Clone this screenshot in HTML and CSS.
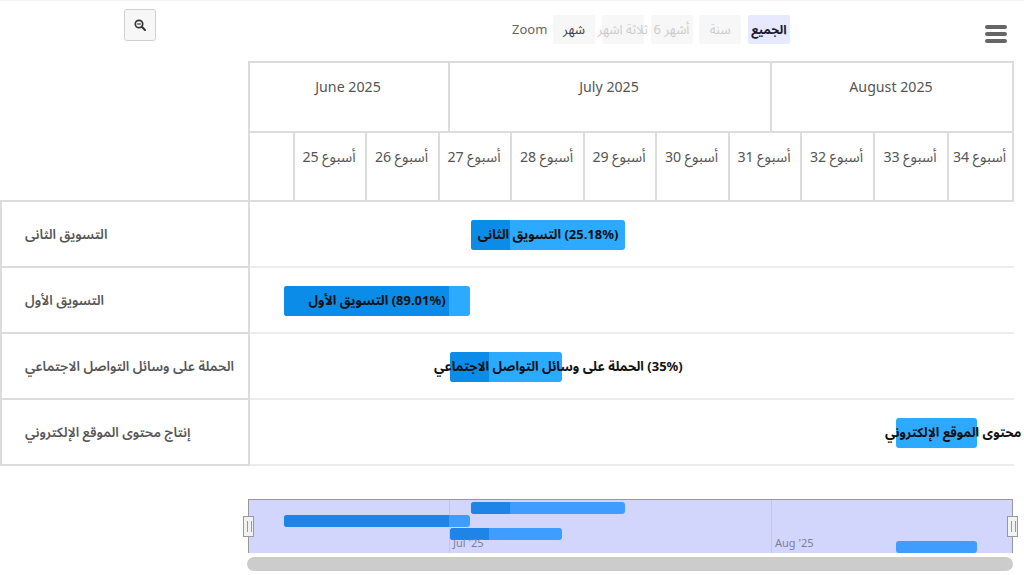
FILE: index.html
```html
<!DOCTYPE html>
<html lang="ar">
<head>
    <meta charset="UTF-8">
    <meta name="viewport" content="width=device-width, initial-scale=1.0">
    <title>Gantt</title>
    <link rel="stylesheet" href="styles.css">
</head>
<body>
    <div class="page">
        <!-- Toolbar -->
        <header class="toolbar">
            <button class="search-btn" aria-label="بحث">
                <svg width="12" height="12" viewBox="0 0 12 12">
                    <circle cx="5" cy="5" r="3.7" fill="none" stroke="#333" stroke-width="1.7"/>
                    <path d="M3.2 5h3.6" stroke="#333" stroke-width="1.2"/>
                    <path d="M7.8 7.8l3.2 3.2" stroke="#333" stroke-width="2" stroke-linecap="round"/>
                </svg>
            </button>
            <div class="range">
                <span class="range-label">Zoom</span>
                <button class="range-btn">شهر</button>
                <button class="range-btn disabled">ثلاثة اشهر</button>
                <button class="range-btn disabled">6 أشهر</button>
                <button class="range-btn disabled">سنة</button>
                <button class="range-btn selected">الجميع</button>
            </div>
            <button class="menu-btn" aria-label="القائمة">
                <span class="bar-line"></span>
                <span class="bar-line"></span>
                <span class="bar-line"></span>
            </button>
        </header>

        <!-- Cabecera de fechas -->
        <div class="dates">
            <div class="months">
                <div class="month">June 2025</div>
                <div class="month">July 2025</div>
                <div class="month month-august">August 2025</div>
            </div>
            <div class="weeks">
                <div class="week"></div>
                <div class="week">أسبوع 25</div>
                <div class="week">أسبوع 26</div>
                <div class="week">أسبوع 27</div>
                <div class="week">أسبوع 28</div>
                <div class="week">أسبوع 29</div>
                <div class="week">أسبوع 30</div>
                <div class="week">أسبوع 31</div>
                <div class="week">أسبوع 32</div>
                <div class="week">أسبوع 33</div>
                <div class="week week-last">أسبوع 34</div>
            </div>
        </div>

        <!-- Filas -->
        <div class="rows">
            <div class="row">
                <div class="row-name"><span dir="rtl">التسويق الثانى</span></div>
                <div class="row-track">
                    <div class="task" style="left: 221px; width: 154px;">
                        <div class="task-done" style="width: 39px;"></div>
                        <span class="task-label"><bdi>التسويق الثانى</bdi> <bdi dir="ltr">(25.18%)</bdi></span>
                    </div>
                </div>
            </div>
            <div class="row">
                <div class="row-name"><span dir="rtl">التسويق الأول</span></div>
                <div class="row-track">
                    <div class="task" style="left: 34px; width: 186px;">
                        <div class="task-done" style="width: 165px;"></div>
                        <span class="task-label"><bdi>التسويق الأول</bdi> <bdi dir="ltr">(89.01%)</bdi></span>
                    </div>
                </div>
            </div>
            <div class="row">
                <div class="row-name"><span dir="rtl">الحملة على وسائل التواصل الاجتماعي</span></div>
                <div class="row-track">
                    <div class="task" style="left: 200px; width: 112px;">
                        <div class="task-done" style="width: 39px;"></div>
                        <span class="task-label label-social"><bdi>الحملة على وسائل التواصل الاجتماعي</bdi> <bdi dir="ltr">(35%)</bdi></span>
                    </div>
                </div>
            </div>
            <div class="row">
                <div class="row-name"><span dir="rtl">إنتاج محتوى الموقع الإلكتروني</span></div>
                <div class="row-track">
                    <div class="task" style="left: 646px; width: 81px;">
                        <span class="task-label label-content" dir="rtl">محتوى الموقع الإلكتروني</span>
                    </div>
                </div>
            </div>
        </div>

        <!-- Navegador -->
        <div class="navigator">
            <div class="nav-grid" style="left: 200px;"></div>
            <div class="nav-grid" style="left: 522px;"></div>
            <div class="nav-task" style="left: 222px; top: 2px; width: 154px;"><div class="nav-done" style="width: 39px;"></div></div>
            <div class="nav-task" style="left: 35px; top: 15px; width: 186px;"><div class="nav-done" style="width: 165px;"></div></div>
            <div class="nav-task" style="left: 201px; top: 28px; width: 112px;"><div class="nav-done" style="width: 39px;"></div></div>
            <div class="nav-task" style="left: 647px; top: 41px; width: 81px;"></div>
            <span class="nav-label" style="left: 204px;">Jul '25</span>
            <span class="nav-label" style="left: 526px;">Aug '25</span>
            <div class="handle handle-left"></div>
            <div class="handle handle-right"></div>
        </div>
        <div class="scrollbar"></div>
    </div>
</body>
</html>
```

FILE: styles.css
```css
/* Base */
* {
    margin: 0;
    padding: 0;
    box-sizing: border-box;
}

body {
    background: white;
    font-family: "Noto Sans", "Noto Sans Arabic", "Open Sans", sans-serif;
    color: #555;
}

button {
    font-family: inherit;
    border: none;
    background: none;
}

.page {
    width: 1024px;
    height: 575px;
    overflow: hidden;
    border-top: 1px solid #f2f2f2;
}

/* Toolbar */
.toolbar {
    display: flex;
    align-items: flex-start;
    height: 60px;
}

.search-btn {
    width: 32px;
    height: 32px;
    margin: 8px 0 0 124px;
    display: flex;
    align-items: center;
    justify-content: center;
    background: #f7f7f7;
    border: 1px solid #d0d0d0;
    border-radius: 3px;
}

.range {
    display: flex;
    align-items: center;
    gap: 6.75px;
    margin: 14px 0 0 356px;
}

.range-label {
    width: 41px;
    margin-top: -1px;
    margin-right: -6.75px;
    font-size: 13px;
    color: #666;
}

.range-btn {
    width: 42px;
    height: 29px;
    font-size: 13px;
    line-height: 29px;
    white-space: nowrap;
    display: flex;
    justify-content: center;
    background: #f7f7f7;
    border-radius: 2px;
    color: #444;
}

.range-btn.disabled {
    color: #ccc;
}

.range-btn.selected {
    background: #e6e9ff;
    color: #1a1a2e;
    font-size: 12.5px;
    font-weight: 700;
}

.menu-btn {
    width: 22px;
    margin: 24px 0 0 195px;
}

.bar-line {
    display: block;
    height: 4px;
    margin-bottom: 3px;
    background: #666;
    border-radius: 2px;
}

/* Cabecera de fechas */
.dates {
    margin-left: 248px;
    width: 766px;
}

.months,
.weeks {
    display: grid;
    height: 70px;
    border-left: 2px solid #dcdcdc;
    border-right: 2px solid #dcdcdc;
    border-top: 2px solid #dcdcdc;
}

.months {
    grid-template-columns: 200px 322px 1fr;
}

.weeks {
    grid-template-columns: 45px 72px 73px 72px 73px 72px 73px 72px 73px 74px 1fr;
    height: 71px;
    border-bottom: 2px solid #dcdcdc;
}

.month {
    display: flex;
    justify-content: center;
    align-items: center;
    padding: 0 2px 22px 0;
    font-size: 14.2px;
    border-right: 2px solid #dcdcdc;
}

.month-august {
    border-right: none;
}

.week {
    display: flex;
    justify-content: center;
    align-items: center;
    padding: 0 2px 19px 0;
    font-size: 14.2px;
    border-right: 2px solid #dcdcdc;
    white-space: nowrap;
}

.week-last {
    border-right: none;
}

/* Filas */
.row {
    display: flex;
    height: 66px;
}

.row-name {
    width: 250px;
    display: flex;
    align-items: center;
    padding: 2px 0 0 23px;
    font-size: 13.4px;
    font-weight: 600;
    border: 2px solid #dcdcdc;
    border-top: none;
}

.rows {
    margin-top: -2px;
    border-top: 2px solid transparent;
}

.row:first-child .row-name {
    height: 68px;
    margin-top: -2px;
    border-top: 2px solid #dcdcdc;
}

.row-track {
    position: relative;
    width: 764px;
    border-bottom: 2px solid #ececec;
}

.task {
    position: absolute;
    top: 18px;
    height: 30px;
    background: #2caaff;
    border-radius: 3px;
}

.task-done {
    height: 100%;
    background: #0a8ce8;
    border-radius: 3px 0 0 3px;
}

.task-label {
    position: absolute;
    top: 50%;
    left: 50%;
    transform: translate(-50%, -50%);
    font-size: 13px;
    font-weight: 700;
    color: #111;
    white-space: nowrap;
}

.label-social {
    left: -16px;
    transform: translateY(-50%);
}

.label-content {
    left: -11px;
    transform: translateY(-50%);
}

/* Navegador */
.navigator {
    position: relative;
    margin: 33px 0 0 248px;
    width: 765px;
    height: 54px;
    background: #d2d6fc;
    border: 1px solid #999;
    border-bottom: none;
}

.nav-grid {
    position: absolute;
    top: 0;
    bottom: 0;
    width: 1px;
    background: #c2c6ea;
}

.nav-task {
    position: absolute;
    height: 11.5px;
    background: #3f9dff;
    border-radius: 3px;
}

.nav-done {
    height: 100%;
    background: #1f84e8;
    border-radius: 3px 0 0 3px;
}

.nav-label {
    position: absolute;
    bottom: 3px;
    font-size: 11px;
    color: #7c7f9c;
}

.handle {
    position: absolute;
    top: 16px;
    width: 11px;
    height: 21px;
    background: #f2f2f2;
    border: 1px solid #999;
}

.handle::after {
    content: "";
    position: absolute;
    left: 3px;
    top: 4px;
    width: 3px;
    height: 11px;
    border-left: 1px solid #999;
    border-right: 1px solid #999;
}

.handle-left {
    left: -6px;
}

.handle-right {
    right: -6px;
}

.scrollbar {
    margin: 4px 0 0 247px;
    width: 766px;
    height: 14px;
    background: #ccc;
    border-radius: 7px;
}
```
